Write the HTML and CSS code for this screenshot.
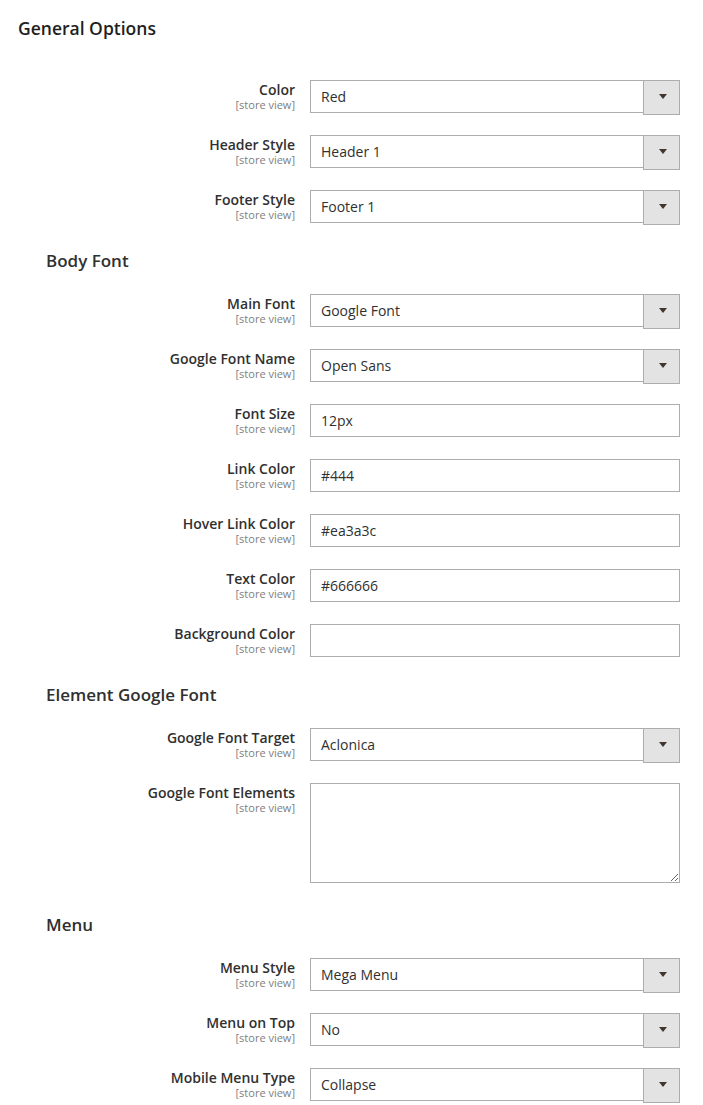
FILE: index.html
```html
<!DOCTYPE html>
<html lang="en">
<head>
<meta charset="utf-8">
<title>General Options</title>
<link rel="stylesheet" href="styles.css">
</head>
<body>
<div class="config">
  <h2 class="section-title">General Options</h2>

  <div class="group">
    <div class="field">
      <label class="label">Color<span class="scope">[store view]</span></label>
      <div class="control select"><select><option>Red</option></select></div>
    </div>
    <div class="field">
      <label class="label">Header Style<span class="scope">[store view]</span></label>
      <div class="control select"><select><option>Header 1</option></select></div>
    </div>
    <div class="field">
      <label class="label">Footer Style<span class="scope">[store view]</span></label>
      <div class="control select"><select><option>Footer 1</option></select></div>
    </div>
  </div>

  <h3 class="legend">Body Font</h3>
  <div class="group">
    <div class="field">
      <label class="label">Main Font<span class="scope">[store view]</span></label>
      <div class="control select"><select><option>Google Font</option></select></div>
    </div>
    <div class="field">
      <label class="label">Google Font Name<span class="scope">[store view]</span></label>
      <div class="control select"><select><option>Open Sans</option></select></div>
    </div>
    <div class="field">
      <label class="label">Font Size<span class="scope">[store view]</span></label>
      <div class="control"><input class="text" type="text" value="12px"></div>
    </div>
    <div class="field">
      <label class="label">Link Color<span class="scope">[store view]</span></label>
      <div class="control"><input class="text" type="text" value="#444"></div>
    </div>
    <div class="field">
      <label class="label">Hover Link Color<span class="scope">[store view]</span></label>
      <div class="control"><input class="text" type="text" value="#ea3a3c"></div>
    </div>
    <div class="field">
      <label class="label">Text Color<span class="scope">[store view]</span></label>
      <div class="control"><input class="text" type="text" value="#666666"></div>
    </div>
    <div class="field">
      <label class="label">Background Color<span class="scope">[store view]</span></label>
      <div class="control"><input class="text" type="text" value=""></div>
    </div>
  </div>

  <h3 class="legend">Element Google Font</h3>
  <div class="group">
    <div class="field">
      <label class="label">Google Font Target<span class="scope">[store view]</span></label>
      <div class="control select"><select><option>Aclonica</option></select></div>
    </div>
    <div class="field field-textarea">
      <label class="label">Google Font Elements<span class="scope">[store view]</span></label>
      <div class="control"><textarea class="area"></textarea></div>
    </div>
  </div>

  <h3 class="legend">Menu</h3>
  <div class="group">
    <div class="field">
      <label class="label">Menu Style<span class="scope">[store view]</span></label>
      <div class="control select"><select><option>Mega Menu</option></select></div>
    </div>
    <div class="field">
      <label class="label">Menu on Top<span class="scope">[store view]</span></label>
      <div class="control select"><select><option>No</option></select></div>
    </div>
    <div class="field">
      <label class="label">Mobile Menu Type<span class="scope">[store view]</span></label>
      <div class="control select"><select><option>Collapse</option></select></div>
    </div>
  </div>
</div>
</body>
</html>
```

FILE: styles.css
```css
* {
  box-sizing: border-box;
}

html, body {
  margin: 0;
  padding: 0;
  background: #ffffff;
}

body {
  font-family: "Open Sans", "Liberation Sans", sans-serif;
  color: #303030;
  font-size: 14px;
}

.config {
  display: flex;
  flex-direction: column;
  padding: 16px 0 0 0;
}

.section-title {
  margin: 0 0 40px 0;
  padding-left: 18px;
  font-size: 17.5px;
  line-height: 24px;
  font-weight: 600;
  color: #1f1f1f;
}

.group {
  display: flex;
  flex-direction: column;
}

.legend {
  margin: 4px 0 21px 0;
  padding-left: 46px;
  font-size: 17px;
  line-height: 24px;
  font-weight: 600;
  color: #303030;
}

.field {
  display: grid;
  grid-template-columns: 295px 370px;
  column-gap: 15px;
  margin-bottom: 22px;
}

.field-textarea {
  margin-bottom: 26px;
}

.label {
  display: block;
  text-align: right;
  font-size: 14px;
  line-height: 19px;
  font-weight: 600;
  color: #303030;
}

.scope {
  display: block;
  font-size: 11px;
  line-height: 11px;
  font-weight: 400;
  color: #808080;
}

.control {
  width: 370px;
}

.select {
  position: relative;
  height: 33px;
}

.select select {
  -webkit-appearance: none;
  appearance: none;
  display: block;
  width: 100%;
  height: 33px;
  margin: 0;
  padding: 6px 45px 6px 10px;
  border: 1px solid #adadad;
  border-radius: 0;
  background: #ffffff;
  font-family: "Open Sans", "Liberation Sans", sans-serif;
  font-size: 14px;
  line-height: 19px;
  color: #303030;
  outline: none;
}

.select::before {
  content: "";
  position: absolute;
  top: 0;
  right: 0;
  width: 35px;
  height: 33px;
  background: #e3e3e3;
  border: 1px solid #adadad;
  pointer-events: none;
}

.select::after {
  content: "";
  position: absolute;
  top: 14px;
  right: 13px;
  width: 0;
  height: 0;
  border-left: 4px solid transparent;
  border-right: 4px solid transparent;
  border-top: 5px solid #41362f;
  pointer-events: none;
}

.text {
  display: block;
  width: 100%;
  height: 33px;
  margin: 0;
  padding: 6px 10px;
  border: 1px solid #adadad;
  border-radius: 0;
  background: #ffffff;
  font-family: "Open Sans", "Liberation Sans", sans-serif;
  font-size: 14px;
  line-height: 19px;
  color: #303030;
  outline: none;
}

.area {
  display: block;
  width: 100%;
  height: 100px;
  margin: 0;
  padding: 6px 10px;
  border: 1px solid #adadad;
  border-radius: 0;
  background: #ffffff;
  font-family: "Open Sans", "Liberation Sans", sans-serif;
  font-size: 14px;
  line-height: 19px;
  color: #303030;
  resize: vertical;
  outline: none;
}
```
